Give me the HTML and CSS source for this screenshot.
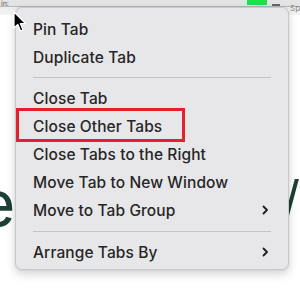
FILE: index.html
```html
<!DOCTYPE html>
<html>
<head>
<meta charset="utf-8">
<link rel="stylesheet" href="styles.css">
</head>
<body>
<div class="page">
  <div class="toolbar">
    <span class="tb-text">in:</span>
    <span class="tb-green"></span>
    <span class="tb-dash"></span>
    <span class="tb-sp">Sp</span>
  </div>
  <div class="hero">
    <span class="hero-left">e</span>
    <span class="hero-right">/</span>
  </div>

  <div class="menu">
    <div class="item">Pin Tab</div>
    <div class="item">Duplicate Tab</div>
    <div class="sep"></div>
    <div class="item">Close Tab</div>
    <div class="item">Close Other Tabs</div>
    <div class="item">Close Tabs to the Right</div>
    <div class="item">Move Tab to New Window</div>
    <div class="item sub">Move to Tab Group
      <svg class="chev" width="7" height="10" viewBox="0 0 7 10"><polyline points="1.5,1.5 5,5 1.5,8.5" fill="none" stroke="#1e1e1e" stroke-width="1.8" stroke-linecap="round" stroke-linejoin="round"/></svg>
    </div>
    <div class="sep sep2"></div>
    <div class="item sub">Arrange Tabs By
      <svg class="chev" width="7" height="10" viewBox="0 0 7 10"><polyline points="1.5,1.5 5,5 1.5,8.5" fill="none" stroke="#1e1e1e" stroke-width="1.8" stroke-linecap="round" stroke-linejoin="round"/></svg>
    </div>
    <div class="highlight"></div>
  </div>

  <svg class="cursor" width="14" height="22" viewBox="0 0 14 22">
    <path d="M1 1 L1 17 L4.8 13.4 L7.6 20 L10 19 L7.3 12.6 L12.5 12.6 Z" fill="#000" stroke="#fff" stroke-width="1.2" stroke-linejoin="round"/>
  </svg>
</div>
</body>
</html>
```

FILE: styles.css
```css
html, body {
  margin: 0;
  padding: 0;
  background: #ffffff;
}
.page {
  position: relative;
  width: 300px;
  height: 290px;
  overflow: hidden;
  background: #ffffff;
  font-family: "Inter", "Liberation Sans", sans-serif;
}
.toolbar {
  height: 15px;
  background: linear-gradient(#e4e4e4 0, #e4e4e4 6px, #b8b8b8 6px, #b8b8b8 7px, #ececec 7px, #f4f4f4 15px);
  position: relative;
}
.tb-text {
  position: absolute;
  left: 1px;
  top: 0;
  font-size: 7px;
  line-height: 7px;
  color: #555;
}
.tb-green {
  position: absolute;
  left: 247px;
  top: 0;
  width: 20px;
  height: 5px;
  background: #1ee04a;
}
.tb-dash {
  position: absolute;
  left: 272px;
  top: 4px;
  width: 8px;
  height: 2px;
  background: #666;
}
.tb-sp {
  position: absolute;
  left: 290px;
  top: 3px;
  font-size: 8px;
  line-height: 10px;
  color: #888;
}
.hero {
  position: absolute;
  top: 168px;
  left: 0;
  width: 300px;
  height: 70px;
  font-size: 64px;
  line-height: 70px;
  color: #1d3f36;
}
.hero-left {
  position: absolute;
  left: -22px;
}
.hero-right {
  position: absolute;
  left: 282px;
  font-size: 50px;
  top: -4px;
}
.menu {
  position: absolute;
  left: 15px;
  top: 7px;
  width: 274px;
  height: 263px;
  box-sizing: border-box;
  padding: 7px 0 0 0;
  background: #e7e7e9;
  border: 1px solid #c9c9cb;
  border-radius: 7px;
  box-shadow: 0 4px 10px rgba(0,0,0,0.18), 0 0 2px rgba(0,0,0,0.1);
}
.item {
  height: 28px;
  display: flex;
  align-items: center;
  padding: 0 19px 0 17px;
  font-size: 15.5px;
  font-weight: 500;
  color: #262626;
  letter-spacing: 0.1px;
}
.sub {
  justify-content: space-between;
}
.chev {
  display: block;
}
.sep {
  height: 1px;
  margin: 6px 17px 6px 17px;
  background: #c3c3c5;
}
.sep2 {
  margin: 7px 17px 6px 17px;
}
.highlight {
  position: absolute;
  left: 0px;
  top: 100px;
  width: 169px;
  height: 34px;
  box-sizing: border-box;
  border: 3px solid #e3202c;
}
.cursor {
  position: absolute;
  left: 13px;
  top: 11px;
}
```
